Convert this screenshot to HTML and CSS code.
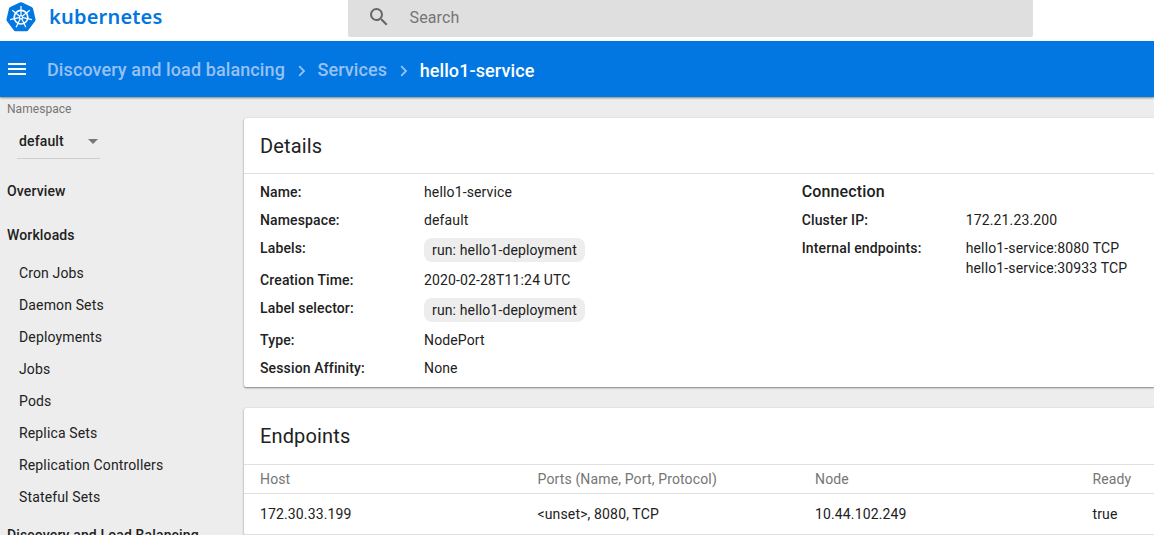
FILE: index.html
```html
<!DOCTYPE html>
<html lang="en">
<head>
<meta charset="utf-8">
<title>Kubernetes Dashboard</title>
<link rel="stylesheet" href="styles.css">
</head>
<body>
<header class="topbar">
  <div class="brand">
    <svg class="logo" width="30" height="30" viewBox="0 0 30 30">
      <path class="logo-shape" d="M13.8 .5Q15 -.1 16.2 .5L25.7 5Q26.7 5.5 27 6.6L29.5 17.2Q29.7 18.4 29 19.3L22.4 28Q21.7 29.3 20.4 29.3H9.6Q8.3 29.3 7.6 28L1 19.3Q.3 18.4 .5 17.2L3 6.6Q3.3 5.5 4.3 5Z"/>
      <g class="wheel">
        <circle cx="15" cy="15.2" r="6.8" stroke-width="1.7"/>
        <g stroke-width="1.2">
          <path d="M15 13.2V4"/>
          <path d="M15 13.2V4" transform="rotate(51.43 15 15.2)"/>
          <path d="M15 13.2V4" transform="rotate(102.86 15 15.2)"/>
          <path d="M15 13.2V4" transform="rotate(154.29 15 15.2)"/>
          <path d="M15 13.2V4" transform="rotate(205.71 15 15.2)"/>
          <path d="M15 13.2V4" transform="rotate(257.14 15 15.2)"/>
          <path d="M15 13.2V4" transform="rotate(308.57 15 15.2)"/>
        </g>
        <circle cx="15" cy="15.2" r="1.6" stroke-width="1.3"/>
      </g>
    </svg>
    <span class="wordmark">kubernetes</span>
  </div>
  <div class="search">
    <svg width="24" height="24" viewBox="0 0 24 24"><path d="M15.5 14h-.79l-.28-.27A6.471 6.471 0 0 0 16 9.5 6.5 6.5 0 1 0 9.5 16c1.61 0 3.09-.59 4.23-1.57l.27.28v.79l5 4.99L20.49 19l-4.99-5zm-6 0C7.01 14 5 11.99 5 9.5S7.01 5 9.5 5 14 7.01 14 9.5 11.99 14 9.5 14z"/></svg>
    <span>Search</span>
  </div>
</header>

<nav class="crumbbar">
  <svg class="menu" width="24" height="24" viewBox="0 0 24 24"><path d="M3 18h18v-2H3v2zm0-5h18v-2H3v2zm0-7v2h18V6H3z"/></svg>
  <span class="crumb">Discovery and load balancing</span>
  <svg class="chevron" width="8" height="12" viewBox="0 0 8 12"><path d="M1.2 1.2L6 6L1.2 10.8"/></svg>
  <span class="crumb">Services</span>
  <svg class="chevron" width="8" height="12" viewBox="0 0 8 12"><path d="M1.2 1.2L6 6L1.2 10.8"/></svg>
  <span class="crumb current">hello1-service</span>
</nav>

<div class="layout">
  <aside class="sidebar">
    <div class="ns-label">Namespace</div>
    <div class="ns-select"><span>default</span><i class="arrow"></i></div>
    <div class="group overview">Overview</div>
    <div class="group">Workloads</div>
    <ul class="links">
      <li>Cron Jobs</li>
      <li>Daemon Sets</li>
      <li>Deployments</li>
      <li>Jobs</li>
      <li>Pods</li>
      <li>Replica Sets</li>
      <li>Replication Controllers</li>
      <li>Stateful Sets</li>
    </ul>
    <div class="group">Discovery and Load Balancing</div>
  </aside>

  <main class="content">
    <section class="card">
      <h2>Details</h2>
      <div class="details">
        <dl class="props">
          <dt>Name:</dt><dd>hello1-service</dd>
          <dt>Namespace:</dt><dd>default</dd>
          <dt>Labels:</dt><dd><span class="chip">run: hello1-deployment</span></dd>
          <dt>Creation Time:</dt><dd>2020-02-28T11:24 UTC</dd>
          <dt>Label selector:</dt><dd><span class="chip">run: hello1-deployment</span></dd>
          <dt>Type:</dt><dd>NodePort</dd>
          <dt>Session Affinity:</dt><dd>None</dd>
        </dl>
        <div class="connection">
          <h3>Connection</h3>
          <dl class="props">
            <dt>Cluster IP:</dt><dd>172.21.23.200</dd>
            <dt>Internal endpoints:</dt><dd>hello1-service:8080 TCP<br>hello1-service:30933 TCP</dd>
          </dl>
        </div>
      </div>
    </section>

    <section class="card endpoints">
      <h2>Endpoints</h2>
      <div class="row head"><span>Host</span><span>Ports (Name, Port, Protocol)</span><span>Node</span><span>Ready</span></div>
      <div class="row"><span>172.30.33.199</span><span>&lt;unset&gt;, 8080, TCP</span><span>10.44.102.249</span><span>true</span></div>
    </section>
  </main>
</div>
</body>
</html>
```

FILE: styles.css
```css
* { box-sizing: border-box; }

body {
  margin: 0;
  height: 535px;
  overflow: hidden;
  display: flex;
  flex-direction: column;
  background: #ededed;
  color: #212121;
  font: 14px/20px Roboto, sans-serif;
  letter-spacing: 0.14px;
  white-space: nowrap;
}

.topbar { display: flex; flex: none; height: 41px; background: #fff; }
.brand { display: flex; width: 348px; padding: 2px 0 0 6px; gap: 13px; }
.logo { flex: none; }
.logo-shape { fill: #0277e2; }
.wheel { fill: none; stroke: #fff; }
.wordmark {
  color: #0277e2;
  font: 600 20px/30px "Noto Sans", sans-serif;
  letter-spacing: 0.2px;
}
.search {
  display: flex;
  align-items: center;
  gap: 18.5px;
  width: 685px;
  height: 37px;
  padding: 0 0 2px 19px;
  background: #dfdfdf;
  border-radius: 0 0 2px 2px;
  color: #757575;
  font-size: 16px;
}
.search svg { margin-top: -1px; fill: #666; }

.crumbbar {
  display: flex;
  flex: none;
  align-items: center;
  height: 56px;
  padding-left: 5px;
  background: #0277e2;
  box-shadow: 0 1px 2px rgba(0, 0, 0, 0.45);
  font-size: 18px;
  font-weight: 500;
  letter-spacing: 0.1px;
}
.menu { margin-right: 18px; fill: #fff; }
.crumb { color: #97c1f3; padding-top: 2px; }
.current { color: #fff; padding-top: 4px; }
.chevron { margin: 3px 11.5px 0 13px; fill: none; stroke: #97c1f3; stroke-width: 1.8; }

.layout { display: flex; flex: 1; min-height: 0; }
.sidebar { width: 244px; flex: none; padding: 2px 0 0 7px; }
.ns-label { color: #757575; font-size: 12px; letter-spacing: 0.05px; }
.ns-select {
  display: flex;
  align-items: center;
  justify-content: space-between;
  width: 83px;
  height: 34px;
  margin: 6px 0 0 10px;
  padding: 0 2px 1px;
  border-bottom: 1px solid #cfcfcf;
  font-weight: 500;
}
.arrow { border: 5px solid transparent; border-top-color: #777; border-bottom: 0; }
.group { height: 44px; line-height: 44px; font-weight: 500; }
.overview { margin-top: 10px; }
.links { list-style: none; margin: 0; padding: 0 0 0 12px; }
.links li { height: 32px; line-height: 32px; }

.content { flex: 1; min-width: 0; padding-top: 21px; }
.card {
  height: 269px;
  margin-bottom: 21px;
  background: #fff;
  border-radius: 2px 0 0 2px;
  box-shadow: 0 1px 2px rgba(0, 0, 0, 0.45), 0 0 1px rgba(0, 0, 0, 0.2);
}
.card h2 {
  height: 56px;
  margin: 0;
  padding: 0 16px;
  border-bottom: 1px solid #e0e0e0;
  font-size: 20px;
  font-weight: 400;
  line-height: 57px;
}
.details { display: grid; grid-template-columns: 541.7px 1fr; padding: 8px 0 8px 16px; }
.props {
  display: grid;
  grid-template-columns: 164px 1fr;
  gap: 8px 0;
  margin: 0;
  align-content: start;
}
.props dt { font-weight: 500; }
.props dd { margin: 0; }
.chip {
  display: block;
  width: max-content;
  padding: 0 8px;
  border-radius: 8px;
  background: #ededed;
  line-height: 24px;
}
.connection h3 { margin: 0 0 8px; font-size: 16px; font-weight: 500; line-height: 20px; }

.endpoints { height: 127px; }
.endpoints h2 { height: 57px; }
.row {
  display: grid;
  grid-template-columns: 277.5px 277.5px 277.5px 1fr;
  height: 41px;
  padding-left: 16px;
  border-bottom: 1px solid #e0e0e0;
  line-height: 40px;
}
.head { height: 29px; line-height: 28px; color: #757575; }
```
